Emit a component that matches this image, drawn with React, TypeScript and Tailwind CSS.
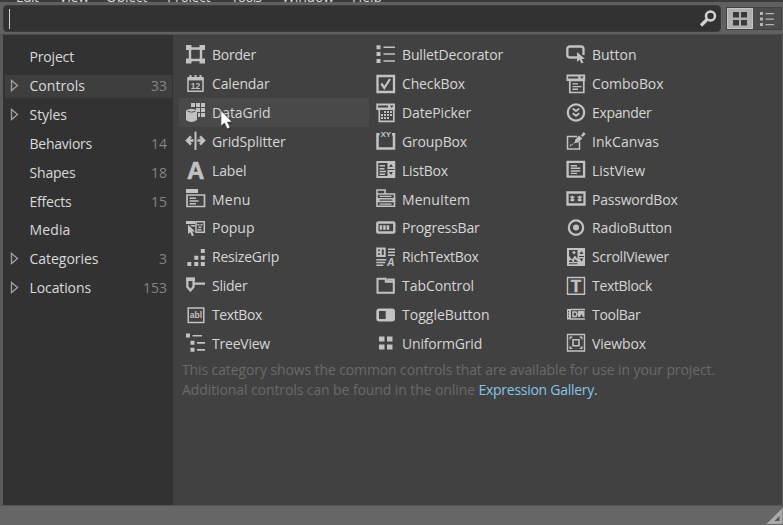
import { useLayoutEffect, useRef, useState } from "react";
import type { ReactNode } from "react";

/** Tracks a label so that it occupies a given advance width. */
function Fit({ text, w, className = "" }: { text: string; w: number; className?: string }) {
  const ref = useRef<HTMLSpanElement>(null);
  const [spacing, setSpacing] = useState(0);
  useLayoutEffect(() => {
    const el = ref.current;
    if (!el) return;
    el.style.letterSpacing = "0px";
    const natural = el.getBoundingClientRect().width;
    const next = (w - natural) / text.length;
    el.style.letterSpacing = `${next}px`;
    setSpacing(next);
  }, [text, w]);
  return (
    <span ref={ref} className={`inline-block whitespace-pre ${className}`} style={{ letterSpacing: `${spacing}px` }}>
      {text}
    </span>
  );
}

const D = "#414141";

const icons: Record<string, ReactNode> = {
  Border: (
    <>
      <path d="M1 1h5.500v5H1zM14.500 1H20v5h-5.500zM1 14.500h5.500v5H1zM14.500 14.500H20v5h-5.500z" />
      <path d="M5 4.500h11v11.500H5z" fill="none" stroke="currentColor" strokeWidth="2.400" />
    </>
  ),
  Calendar: (
    <>
      <path d="M3 6.500h15v11.700H3z" fill="none" stroke="currentColor" strokeWidth="1.500" />
      <path d="M4.500 2h2v3h-2zM9.500 2h2v3h-2zM14.500 2h2v3h-2zM2.300 4h16.400v3.200H2.300z" />
      <text x="10.600" y="16" fontSize="8.500" fontWeight="bold" textAnchor="middle">12</text>
    </>
  ),
  DataGrid: (
    <>
      <path d="M6 1h4v4H6zM11 1h4v4h-4zM16 1h4v4h-4zM11 6h4v4h-4zM16 6h4v4h-4zM13 11h2v4h-2zM16 11h4v4h-4z" />
      <path d="M1 8.500Q6.500 5 12 8.500V18q-5.500 4-11 0z" />
      <path d="M2.500 9.300q4 1.800 8 0" fill="none" stroke={D} strokeWidth=".8" />
    </>
  ),
  GridSplitter: (
    <>
      <path d="M9.500 1.500h2v18.500h-2z" />
      <path d="M8.500 10.500H2M6 6.500l-4 4 4 4M12.500 10.500H19M15 6.500l4 4-4 4" fill="none" stroke="currentColor" strokeWidth="2.500" />
    </>
  ),
  Label: <text x="10.700" y="19.500" fontSize="24" fontWeight="bold" stroke="currentColor" strokeWidth=".6" textAnchor="middle">A</text>,
  Menu: (
    <>
      <path d="M1 1h12v4H1z" />
      <path d="M2 7h17.500v11.500H2z" fill="none" stroke="currentColor" strokeWidth="1.700" />
      <path d="M4.500 9.500H11V11H4.500zM4.500 12.200h9v1.500h-9zM4.500 15H11v1.500H4.500z" />
    </>
  ),
  Popup: (
    <>
      <path d="M1 4h9v3H1z" />
      <path d="M11 4.800h8.300v10.500H11z" fill="none" stroke="currentColor" strokeWidth="1.500" />
      <path d="M12.500 7h2v1.500h-2zM15.500 7h2v1.500h-2zM13.500 9.500h3V11h-3zM12.500 12h4v1.500h-4zM5.500 8h4.500v1.500H6.500zM3 7.500V17l2.200-1.800L7 19.300l2-1-1.800-3.800H10z" />
    </>
  ),
  ResizeGrip: <path d="M2.300 16h4v4h-4zM9.300 16h4v4h-4zM15.800 16h4v4h-4zM9.300 9.700h4v4h-4zM15.800 9.700h4v4h-4zM15.800 3h4v4h-4z" />,
  Slider: (
    <>
      <path d="M2.300 3.800h6.200v8L5.400 15.500l-3.100-3.700z" fill="none" stroke="currentColor" strokeWidth="2.200" />
      <path d="M1 2.500h9V6H1zM9 7.500h11v2.200H9z" />
    </>
  ),
  TextBox: (
    <>
      <path d="M3.200 4h15.600v14.500H3.200z" fill="none" stroke="currentColor" strokeWidth="1.500" />
      <text x="11" y="14" fontSize="8.500" fontWeight="bold" textAnchor="middle">abl</text>
    </>
  ),
  TreeView: <path d="M1 1.500h4v4H1zM7.500 3H17v1.400H7.500zM5.500 8.700h4v4h-4zM12 10h8v1.700h-8zM5.500 15.700h4v4h-4zM12 17h8v1.700h-8z" />,
  BulletDecorator: <path d="M1.500 1.200h4v4h-4zM8.500 2.500h11.500v1.500H8.500zM1.500 8h4v4h-4zM8.500 9.300h11.500v1.500H8.500zM1.500 15h4v4h-4zM8.500 16.300h11.500v1.500H8.500z" />,
  CheckBox: (
    <>
      <path d="M2.500 3h16.500v16H2.500z" fill="none" stroke="currentColor" strokeWidth="2.300" />
      <path d="M6.300 10.500l3 4.500L15 6" fill="none" stroke="currentColor" strokeWidth="2.300" />
    </>
  ),
  DatePicker: (
    <>
      <path d="M1.300 1.500H20V8H1.300z" />
      <path d="M3 3.500h10v2H3zM15 3.500h3.500L16.700 6z" fill={D} />
      <path d="M4.300 7h14.500v12.300H4.300z" fill="none" stroke="currentColor" strokeWidth="1.700" />
      <path d="M9 9h2v2H9zM12 9h2v2h-2zM15 9h2v2h-2zM6 12h2v2H6zM9 12h2v2H9zM12 12h2v2h-2zM15 12h2v2h-2zM6 15h2v2H6zM9 15h2v2H9zM12 15h2v2h-2z" />
    </>
  ),
  GroupBox: (
    <>
      <path d="M4.500 4.300h-2v14.200H19V4.300h-2" fill="none" stroke="currentColor" strokeWidth="2.500" />
      <text x="10.800" y="7" fontSize="8" fontWeight="bold" textAnchor="middle">XY</text>
    </>
  ),
  ListBox: (
    <>
      <path d="M2.300 3h17v15h-17z" fill="none" stroke="currentColor" strokeWidth="1.900" />
      <path d="M4.500 6H10v1.500H4.500zM4.500 9h5v1.500h-5zM4.500 11.800H11v1.500H4.500zM4.500 14.500H10V16H4.500zM12.500 3h7v15h-7z" />
      <path d="M14 8l2-3 2 3zM14 13h4l-2 3zM12.500 10h7v1h-7z" fill={D} />
    </>
  ),
  MenuItem: (
    <>
      <path d="M2 2h8v4H2zM2 6h17.500v5H2zM2 13.500h17.500v4.700H2z" fill="none" stroke="currentColor" strokeWidth="1.600" />
      <path d="M1.200 10h19v4h-19zM4.500 7.700h12v1.300h-12zM4.500 15.400h12v1.300h-12z" />
      <path d="M4.500 11.500h13v1.200h-13z" fill={D} />
    </>
  ),
  ProgressBar: (
    <>
      <rect x="2.300" y="5.500" width="17" height="10" rx="1" fill="none" stroke="currentColor" strokeWidth="2.400" />
      <path d="M4.700 8.200h2.500v4.500H4.700zM8.200 8.200h2.500v4.500H8.200zM11.700 8.200h2.500v4.500h-2.500z" />
    </>
  ),
  RichTextBox: (
    <>
      <path d="M2.200 2.500h7.500v7.500H2.200zM5.800 2.500v7.500M2.200 6.300h3.600" fill="none" stroke="currentColor" strokeWidth="1.900" />
      <path d="M13 2.500h7v1.600h-7zM13 5.500h7v1.600h-7zM13 8.500h7v1.600h-7zM1.300 13h10v1.600h-10zM1.300 15.700h9v1.600h-9zM1.300 18.400h7V20h-7z" />
      <text x="15.700" y="20" fontSize="10.500" fontWeight="bold" fontStyle="italic" textAnchor="middle">A</text>
    </>
  ),
  TabControl: <path d="M2.500 3.800h8.300v3h2.500V4.500h5.500v13.200H2.500zM10.800 6.800h8" fill="none" stroke="currentColor" strokeWidth="2" />,
  ToggleButton: (
    <>
      <rect x="1.300" y="4.500" width="18.700" height="13" rx="3" />
      <rect x="4" y="7" width="6.700" height="8" rx=".5" fill={D} />
    </>
  ),
  UniformGrid: <path d="M4 4.500h5.500v5H4zM12 4.500h5.500v5H12zM4 12.500h5.500v5H4zM12 12.500h5.500v5H12z" />,
  Button: (
    <>
      <path d="M12 13.500H5q-2.700 0-2.700-2.700V5Q2.300 2.500 5 2.500h11q2.500 0 2.500 2.500v6" fill="none" stroke="currentColor" strokeWidth="2.300" />
      <path d="M12 8v10l2.500-2.200 2 3.700 2-1-2-3.500h3.500z" />
    </>
  ),
  ComboBox: (
    <>
      <path d="M1.500 1.500h18.700V8H1.500z" />
      <path d="M3.200 3.400h10v2h-10zM15 3.400h3.700L16.800 6z" fill={D} />
      <path d="M4.800 7.500h14v12h-14z" fill="none" stroke="currentColor" strokeWidth="1.700" />
      <path d="M7.500 10.200H13v1.400H7.500zM7.500 12.900h9v1.400h-9zM7.500 15.600H13V17H7.500z" />
    </>
  ),
  Expander: (
    <>
      <circle cx="11" cy="10.500" r="8.200" fill="none" stroke="currentColor" strokeWidth="2.200" />
      <path d="M7.700 6.500L11 9l3.300-2.500M7.700 11.300l3.300 2.500 3.300-2.500" fill="none" stroke="currentColor" strokeWidth="1.800" />
    </>
  ),
  InkCanvas: (
    <>
      <path d="M12 6.500H2.500V19h12v-7.500" fill="none" stroke="currentColor" strokeWidth="1.500" />
      <path d="M4.500 17l1-3 1.300 1.300zM10 10l4-4.500 3.300 3-4.300 4-3 .5z" />
      <path d="M16 5.500l2.700-3.500 2 2-3.200 3z" />
      <path d="M6.500 15l4.500-3.500" stroke="currentColor" strokeDasharray="2 1" />
    </>
  ),
  ListView: (
    <>
      <path d="M2.600 2.900h16.500v14.800H2.600z" fill="none" stroke="currentColor" strokeWidth="2.300" />
      <path d="M5.700 6H12v1.500H5.700zM5.700 8.600h9.600v1.500H5.700zM5.700 11.200h9.600v1.500H5.700zM5.700 13.700H12v1.400H5.700z" />
    </>
  ),
  PasswordBox: (
    <>
      <path d="M2.500 4.500h17v12h-17z" fill="none" stroke="currentColor" strokeWidth="2.300" />
      <path d="M5.300 8.500l4 4M9.300 8.500l-4 4M12.700 8.500l4 4M16.700 8.500l-4 4M7.300 7.500v6M14.700 7.500v6" fill="none" stroke="currentColor" strokeWidth="1.200" />
    </>
  ),
  RadioButton: (
    <>
      <circle cx="11" cy="10.600" r="7.200" fill="none" stroke="currentColor" strokeWidth="2.200" />
      <circle cx="11" cy="10.600" r="3" />
    </>
  ),
  ScrollViewer: (
    <>
      <path d="M2 2h18v18H2z" />
      <path d="M4 4h8.500v9l-2.500-3.500-3 4L4 10zM4 15l2-1.500L8 16H4zM14.500 8l2-3 2 3zM14.500 12.500h4l-2 3zM4 17.300h8.500v1H4zM14 10h5v1h-5zM9.500 13l3 2v1H9z" fill={D} />
      <circle cx="9" cy="6.500" r="1.500" />
    </>
  ),
  TextBlock: (
    <>
      <path d="M2.500 2.500h17v16.800h-17z" fill="none" stroke="currentColor" strokeWidth="1.400" />
      <text x="11" y="16.700" fontSize="17" fontWeight="bold" stroke="currentColor" strokeWidth=".4" textAnchor="middle">T</text>
    </>
  ),
  ToolBar: (
    <>
      <path d="M5.500 5.500H20M5.500 15H20" fill="none" stroke="currentColor" strokeWidth="1.400" />
      <path d="M2 5h4v10.500H2z" />
      <path d="M3 7h1v1.200H3zM3 9.500h1v1.200H3zM3 12h1v1.200H3z" fill={D} />
      <path d="M8 8h3q2 2.200 0 4.500H8z" fill="none" stroke="currentColor" strokeWidth="1.500" />
      <path d="M13 7h6.500v6H18l-1.500-3L15 13h-2z" />
    </>
  ),
  Viewbox: (
    <>
      <path d="M2.500 2.500h17v16.500h-17z" fill="none" stroke="currentColor" strokeWidth="1.400" />
      <path d="M8 7.800h6v6H8z" fill="none" stroke="currentColor" strokeWidth="1.600" />
      <path d="M4.500 8V4.500H8zM14 4.500h3.500V8zM17.500 13.500V17H14zM8 17H4.500v-3.500z" />
    </>
  ),
};

const columns: [string, number][][] = [
  [["Border", 44], ["Calendar", 57.5], ["DataGrid", 58.5], ["GridSplitter", 73.5], ["Label", 34.5], ["Menu", 38.5], ["Popup", 42.5], ["ResizeGrip", 67], ["Slider", 35.5], ["TextBox", 50], ["TreeView", 58]],
  [["BulletDecorator", 101], ["CheckBox", 63], ["DatePicker", 69], ["GroupBox", 65], ["ListBox", 46], ["MenuItem", 68], ["ProgressBar", 77.5], ["RichTextBox", 76.5], ["TabControl", 72], ["ToggleButton", 87.5], ["UniformGrid", 80]],
  [["Button", 44.5], ["ComboBox", 71.5], ["Expander", 59.5], ["InkCanvas", 67], ["ListView", 53], ["PasswordBox", 85.5], ["RadioButton", 80], ["ScrollViewer", 77], ["TextBlock", 60], ["ToolBar", 48.5], ["Viewbox", 54]],
];

const categories: [string, number, boolean, string][] = [
  ["Project", 44.5, false, ""],
  ["Controls", 55.5, true, "33"],
  ["Styles", 37.5, true, ""],
  ["Behaviors", 62.5, false, "14"],
  ["Shapes", 46, false, "18"],
  ["Effects", 42, false, "15"],
  ["Media", 41, false, ""],
  ["Categories", 69, true, "3"],
  ["Locations", 61.5, true, "153"],
];

function Sidebar() {
  return (
    <nav className="w-[170px] shrink-0 bg-[#323232] pt-2">
      {categories.map(([name, w, expandable, count]) => (
        <div key={name} className="flex h-[28.85px] items-center pl-0.5 pr-px">
          <div className={`flex h-[23px] w-full items-center pr-[5px] ${name === "Controls" ? "bg-[#3e3e3e]" : ""}`}>
            <div className="flex w-[24.5px] shrink-0 pl-[5px]">
              {expandable && (
                <svg width="10" height="14" viewBox="0 0 10 14" className="text-[#a2a2a2]">
                  <path d="M1.500 1.500v10L7.500 6.500z" fill="none" stroke="currentColor" strokeWidth="1.300" />
                </svg>
              )}
            </div>
            <Fit text={name} w={w} className="text-[#dadada]" />
            <span className="ml-auto text-[#858585]">{count}</span>
          </div>
        </div>
      ))}
    </nav>
  );
}

const menus: [string, number, string][] = [
  ["Edit", 22, "w-[43px]"],
  ["View", 30, "w-[47px]"],
  ["Object", 41, "w-[61px]"],
  ["Project", 43, "w-[64px]"],
  ["Tools", 30, "w-[51px]"],
  ["Window", 52, "w-[70px]"],
  ["Help", 30, "w-[40px]"],
];

export default function App() {
  return (
    <div className="flex h-[525px] w-[783px] flex-col overflow-hidden bg-[#5b5b5b] font-['Open_Sans','Noto_Sans',sans-serif] text-[14px] leading-5 text-[#d6d6d6]">
      <div className="flex h-0.5 shrink-0 items-end overflow-hidden bg-[#3b3b3b] pl-4">
        {menus.map(([name, w, box]) => (
          <div key={name} className={`-mb-[5px] shrink-0 ${box}`}>
            <Fit text={name} w={w} />
          </div>
        ))}
      </div>
      <header className="flex h-8 shrink-0 bg-[#606060] pl-[3px] pt-[3px]">
        <div className="flex h-[27px] w-[718px] items-center justify-between rounded-[4px] border border-[#3c3c3c] bg-[#323232] pl-[5px] pr-[2px]">
          <div className="h-5 w-px bg-[#d4d4d4]" />
          <svg width="20" height="20" viewBox="0 0 20 20" className="text-[#d2d2d2]">
            <circle cx="12.500" cy="7" r="4.500" fill="none" stroke="currentColor" strokeWidth="2.600" />
            <path d="M9 10.500l-6 6" stroke="currentColor" strokeWidth="3.200" />
          </svg>
        </div>
        <div className="ml-[5px] mt-0.5 flex h-[23px] w-[56px] border border-[#424242] bg-[#4c4c4c]">
          <div className="flex w-[26px] items-center justify-center border border-[#c4c4c4] bg-[#b0b0b0]">
            <svg width="16" height="16" viewBox="0 0 16 16" fill="#393939">
              <path d="M1 1h6v5.500H1zM9 1h6v5.500H9zM1 9h6v5.500H1zM9 9h6v5.500H9z" />
            </svg>
          </div>
          <div className="flex flex-1 items-center justify-center">
            <svg width="16" height="16" viewBox="0 0 16 16" fill="#b4b4b4">
              <path d="M1 1h3v3H1zM1 6.500h3v3H1zM1 12h3v3H1zM6.500 2H15v1.200H6.500zM6.500 7.500H15v1.200H6.500zM6.500 13H15v1.200H6.500z" />
            </svg>
          </div>
        </div>
      </header>
      <div className="flex min-h-0 flex-1 border-t border-[#4c4c4c] pl-[3px] pr-px">
        <Sidebar />
        <main className="flex-1 bg-[#414141] pl-1.5 pt-[5.5px]">
          <div className="flex">
            {columns.map((column, i) => (
              <div key={i} className="w-[190px] shrink-0">
                {column.map(([name, w]) => (
                  <div
                    key={name}
                    className={`relative flex h-[28.85px] items-center pl-1.5 ${name === "DataGrid" ? "bg-[#494949]" : ""}`}
                  >
                    <svg
                      width="22"
                      height="22"
                      viewBox="0 0 22 22"
                      fill="currentColor"
                      className="mr-[5px] shrink-0 text-[#c2c2c2] font-['Liberation_Sans',sans-serif]"
                    >
                      {icons[name]}
                    </svg>
                    <Fit text={name} w={w} className="mt-px" />
                    {name === "DataGrid" && (
                      <svg width="16" height="22" viewBox="0 0 16 22" className="absolute left-[41px] top-[12px]">
                        <path d="M2 2v16l3.500-3 2.700 5.500 3-1.500-2.500-5H13z" fill="#222" opacity=".5" />
                        <path d="M1 .5v15.500l3.500-3 2.700 5.800 2.800-1.300-2.500-5.500H12z" fill="#fff" stroke="#444" strokeWidth=".6" />
                      </svg>
                    )}
                  </div>
                ))}
              </div>
            ))}
          </div>
          <p className="pl-[3px] pt-[2.5px] text-[#6a6a6a]">
            <Fit text="This category shows the common controls that are available for use in your project." w={533} />
            <br />
            <Fit text="Additional controls can be found in the online " w={296.5} />
            <Fit text="Expression Gallery" w={115.5} className="text-[#85c6e6]" />
            <span className="text-[#85c6e6]">.</span>
          </p>
        </main>
      </div>
      <footer className="flex h-5 shrink-0 items-end justify-end border-t border-[#555] bg-[#666]">
        <svg width="17" height="18" viewBox="0 0 17 18">
          <path d="M16.500 1v16H.5z" fill="#aaa" />
          <path d="M13.500 9v5h-5z" fill="#555" />
        </svg>
      </footer>
    </div>
  );
}
